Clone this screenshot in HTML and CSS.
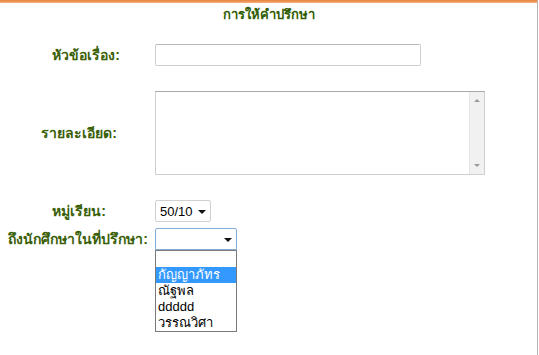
FILE: index.html
```html
<!DOCTYPE html>
<html lang="th">
<head>
    <meta charset="UTF-8">
    <meta name="viewport" content="width=device-width, initial-scale=1.0">
    <title>การให้คำปรึกษา</title>
    <link rel="stylesheet" href="styles.css">
</head>
<body>
    <div id="page">
        <div class="topbar"></div>
        <h1>การให้คำปรึกษา</h1>

        <div class="form">
            <div class="row row-subject">
                <label class="label">หัวข้อเรื่อง:</label>
                <input type="text" class="text-input">
            </div>

            <div class="row row-detail">
                <label class="label">รายละเอียด:</label>
                <div class="textbox">
                    <textarea></textarea>
                    <div class="scrollbar">
                        <span class="arrow-up"></span>
                        <span class="arrow-down"></span>
                    </div>
                </div>
            </div>

            <div class="row row-group">
                <label class="label">หมู่เรียน:</label>
                <div class="select select-group">
                    <span class="select-value">50/10</span>
                    <span class="caret"></span>
                </div>
            </div>

            <div class="row row-student">
                <label class="label">ถึงนักศึกษาในที่ปรึกษา:</label>
                <div class="select-wrap">
                    <div class="select select-student">
                        <span class="select-value"></span>
                        <span class="caret"></span>
                    </div>
                    <!-- open dropdown list -->
                    <ul class="options">
                        <li>&nbsp;</li>
                        <li class="active">กัญญาภัทร</li>
                        <li>ณัฐพล</li>
                        <li>ddddd</li>
                        <li>วรรณวิศา</li>
                    </ul>
                </div>
            </div>
        </div>
    </div>
</body>
</html>
```

FILE: styles.css
```css
body {
    margin: 0;
    padding: 0;
    background-color: #fff;
    font-family: "Liberation Sans", "Noto Sans", "DejaVu Sans", sans-serif;
    font-size: 13px;
}

#page {
    width: 537px;
    height: 355px;
    border-right: 1px solid #b5b5b5;
    box-sizing: content-box;
}

.topbar {
    height: 3px;
    background: linear-gradient(to bottom, #e8803a, #f3b07e);
}

h1 {
    margin: 3px 0 0 0;
    font-size: 13px;
    font-weight: bold;
    color: #2f5c02;
    text-align: center;
    line-height: 18px;
}

.form {
    padding-top: 20px;
}

.row {
    display: grid;
    grid-template-columns: 155px auto;
    align-items: center;
}

.label {
    font-size: 14px;
    font-weight: bold;
    color: #3a6008;
    text-align: center;
    padding-left: 3px;
}

.row-subject .label {
    padding-left: 17px;
}

.row-detail {
    margin-top: 25px;
}

.row-group {
    margin-top: 25px;
}

.row-student {
    margin-top: 6px;
    align-items: start;
}

.row-student .label {
    text-align: right;
    padding-left: 0;
    padding-right: 7px;
    line-height: 22px;
    white-space: nowrap;
}

.text-input {
    width: 266px;
    height: 22px;
    box-sizing: border-box;
    border: 1px solid #cfcfcf;
    border-top-color: #b9b9b9;
    border-radius: 2px;
    margin: 0;
    padding: 2px 4px;
    font-family: inherit;
}

.textbox {
    display: flex;
    width: 330px;
    height: 84px;
    box-sizing: border-box;
    border: 1px solid #cfcfcf;
    border-top-color: #a9a9a9;
}

.textbox textarea {
    flex: 1;
    border: none;
    resize: none;
    outline: none;
    margin: 0;
}

.scrollbar {
    width: 14px;
    background-color: #f1f1f1;
    border-left: 1px solid #e6e6e6;
    display: flex;
    flex-direction: column;
    justify-content: space-between;
    align-items: center;
    padding: 7px 0;
}

.arrow-up {
    border-left: 3px solid transparent;
    border-right: 3px solid transparent;
    border-bottom: 3px solid #9a9a9a;
}

.arrow-down {
    border-left: 3px solid transparent;
    border-right: 3px solid transparent;
    border-top: 3px solid #9a9a9a;
}

.select {
    display: flex;
    align-items: center;
    justify-content: space-between;
    height: 22px;
    box-sizing: border-box;
    border: 1px solid #d0d0d0;
    border-radius: 2px;
    padding: 0 4px 0 4px;
    background-color: #fff;
}

.select-group {
    width: 56px;
}

.select-student {
    width: 82px;
    border-color: #84acd8;
    border-radius: 2px 2px 0 0;
}

.caret {
    border-left: 4px solid transparent;
    border-right: 4px solid transparent;
    border-top: 4px solid #111;
    margin-top: 1px;
}

.select-wrap {
    position: relative;
    width: 82px;
}

.options {
    position: absolute;
    top: 22px;
    left: 0;
    width: 82px;
    box-sizing: border-box;
    margin: 0;
    padding: 0;
    list-style: none;
    border: 1px solid #7a7a7a;
    background-color: #fff;
}

.options li {
    height: 16px;
    line-height: 16px;
    padding-left: 2px;
    color: #000;
    white-space: nowrap;
}

.options li.active {
    background-color: #3399ff;
    color: #fff;
}
```
